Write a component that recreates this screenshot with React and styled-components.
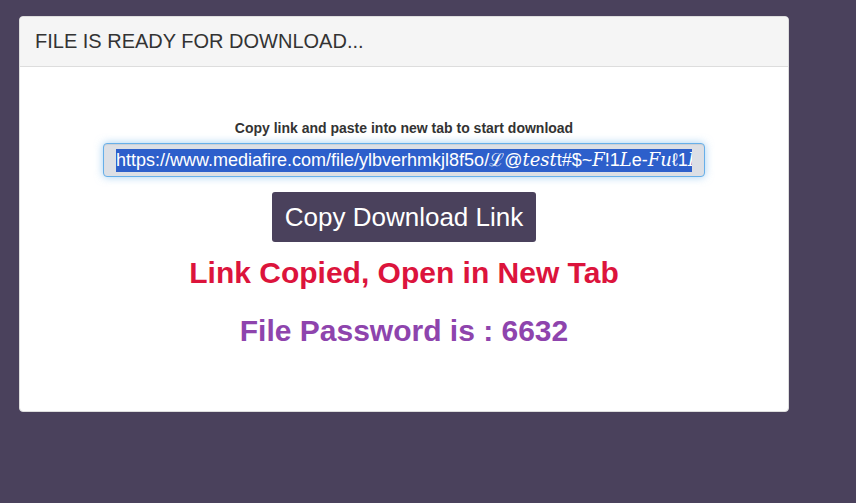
import React from 'react';
import styled, { createGlobalStyle } from 'styled-components';

const GlobalStyle = createGlobalStyle`
    html, body {
        margin: 0;
        padding: 0;
        background: #4a415c;
        font-family: "Liberation Sans", Arial, sans-serif;
    }
`;

const Page = styled.div`
    width: 856px;
    height: 503px;
    padding: 16px 0 0 19px;
    box-sizing: border-box;
`;

const Panel = styled.div`
    width: 770px;
    height: 396px;
    box-sizing: border-box;
    background: #fff;
    border: 1px solid #ddd;
    border-radius: 4px;
    overflow: hidden;
`;

const Heading = styled.div`
    background: #f5f5f5;
    border-bottom: 1px solid #ddd;
    padding: 0 15px;
    height: 49px;
    display: flex;
    align-items: center;
    font-size: 20px;
    color: #333;
`;

const Body = styled.div`
    display: flex;
    flex-direction: column;
    align-items: center;
    padding-top: 52px;
`;

const Label = styled.div`
    font-size: 14px;
    font-weight: bold;
    color: #333;
    line-height: 18px;
    margin-bottom: 6px;
`;

const LinkBox = styled.div`
    width: 602px;
    height: 34px;
    box-sizing: border-box;
    padding: 0 12px;
    display: flex;
    align-items: center;
    background: #dcdfe5;
    border: 1px solid #66afe9;
    border-radius: 4px;
    box-shadow: inset 0 1px 1px rgba(0,0,0,.075), 0 0 8px rgba(102,175,233,.6);
`;

const Track = styled.div`
    flex: 1;
    overflow: hidden;
    white-space: nowrap;
    font-size: 18px;
    font-family: "Liberation Sans", "DejaVu Serif", serif;
`;

const Selected = styled.span`
    background: #2d5fcb;
    color: #fff;
    line-height: 23px;
    display: inline-block;
`;

const Button = styled.button`
    margin-top: 15px;
    width: 264px;
    height: 50px;
    border: none;
    border-radius: 3px;
    background: #4a415c;
    color: #fff;
    font-family: "Liberation Sans", Arial, sans-serif;
    font-size: 26px;
`;

const Message = styled.div`
    font-size: ${props => props.size || '30px'};
    font-weight: bold;
    color: ${props => props.color};
    margin-top: ${props => props.top || '0'};
    line-height: 34px;
`;

function App() {
    const link = 'https://www.mediafire.com/file/ylbverhmkjl8f5o/\u2112@\u{1D461}\u{1D452}\u{1D460}\u{1D461}t#$~\u{1D439}!1\u{1D43F}e-\u{1D439}\u{1D462}\u2113' + '1\u{1D43F}-\u{1D439}\u{1D462}\u2113\u2113';

    return (
        <Page>
            <GlobalStyle />
            <Panel>
                <Heading>FILE IS READY FOR DOWNLOAD...</Heading>
                <Body>
                    <Label>Copy link and paste into new tab to start download</Label>
                    <LinkBox>
                        <Track>
                            <Selected>{link}</Selected>
                        </Track>
                    </LinkBox>
                    <Button>Copy Download Link</Button>
                    <Message color="#dc143c" top="14px">Link Copied, Open in New Tab</Message>
                    <Message color="#8e44ad" top="24px">File Password is : 6632</Message>
                </Body>
            </Panel>
        </Page>
    );
}

export default App;
